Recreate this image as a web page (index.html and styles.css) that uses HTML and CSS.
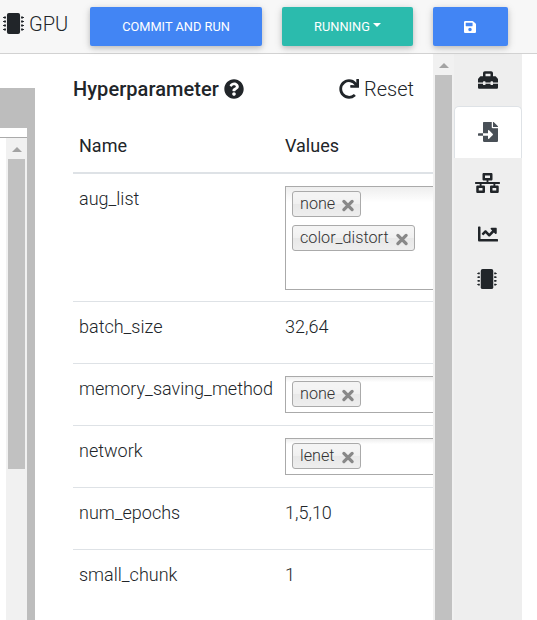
FILE: index.html
```
<!DOCTYPE html>
<html lang="en">
<head>
<meta charset="utf-8">
<title>Hyperparameter</title>
<link rel="stylesheet" href="styles.css">
</head>
<body>
<svg class="defs" aria-hidden="true">
  <symbol id="chip" viewBox="0 0 512 512">
    <rect x="96" width="320" height="512" rx="48"/>
    <path id="pins" d="M512 106v12a6 6 0 0 1-6 6h-18v6a6 6 0 0 1-6 6h-42V88h42a6 6 0 0 1 6 6v6h18a6 6 0 0 1 6 6zM0 106v12a6 6 0 0 0 6 6h18v6a6 6 0 0 0 6 6h42V88H30a6 6 0 0 0-6 6v6H6a6 6 0 0 0-6 6z"/>
    <use href="#pins" y="96"/><use href="#pins" y="192"/><use href="#pins" y="288"/>
  </symbol>
  <symbol id="cross" viewBox="0 0 12 12">
    <path d="M2.2 2.2l7.6 7.6M9.8 2.2L2.2 9.8" fill="none" stroke="#888" stroke-width="3" stroke-linecap="round"/>
  </symbol>
</svg>
<div class="app">
  <header class="toolbar">
    <div class="gpu"><svg class="icon"><use href="#chip"/></svg><span>GPU</span></div>
    <button class="btn commit">COMMIT AND RUN</button>
    <button class="btn running">RUNNING<span class="caret"></span></button>
    <button class="btn save" aria-label="Save"><svg viewBox="0 0 448 512"><path d="M433.941 129.941l-83.882-83.882A48 48 0 0 0 316.118 32H48C21.49 32 0 53.49 0 80v352c0 26.51 21.49 48 48 48h352c26.51 0 48-21.49 48-48V163.882a48 48 0 0 0-14.059-33.941zM224 416c-35.346 0-64-28.654-64-64 0-35.346 28.654-64 64-64s64 28.654 64 64c0 35.346-28.654 64-64 64zm96-304.52V212c0 6.627-5.373 12-12 12H76c-6.627 0-12-5.373-12-12V108c0-6.627 5.373-12 12-12h228.52c3.183 0 6.235 1.264 8.485 3.515l3.48 3.48A11.996 11.996 0 0 1 320 111.48z"/></svg></button>
  </header>
  <main class="workspace">
    <aside class="canvas">
      <div class="canvas-head"></div>
      <div class="canvas-body">
        <div class="scrollbar"><i class="arrow"></i><i class="thumb"></i></div>
      </div>
    </aside>
    <section class="panel">
      <div class="panel-head">
        <h1>Hyperparameter</h1>
        <svg class="icon help" viewBox="0 0 512 512"><path d="M504 256c0 136.997-111.043 248-248 248S8 392.997 8 256C8 119.083 119.043 8 256 8s248 111.083 248 248zM262.655 90c-54.497 0-89.255 22.957-116.549 63.758-3.536 5.286-2.353 12.415 2.715 16.258l34.699 26.31c5.205 3.947 12.621 3.008 16.665-2.122 17.864-22.658 30.113-35.797 57.303-35.797 20.429 0 45.698 13.148 45.698 32.958 0 14.976-12.363 22.667-32.534 33.976C247.128 238.528 216 254.941 216 296v4c0 6.627 5.373 12 12 12h56c6.627 0 12-5.373 12-12v-1.333c0-28.462 83.186-29.647 83.186-106.667 0-58.002-60.165-102-116.531-102zM256 338c-25.365 0-46 20.635-46 46 0 25.364 20.635 46 46 46s46-20.636 46-46c0-25.365-20.635-46-46-46z"/></svg>
        <div class="reset"><svg class="icon" viewBox="0 0 512 512"><path d="M500.33 0h-47.41a12 12 0 0 0-12 12.57l4 82.76A247.42 247.42 0 0 0 256 8C119.34 8 7.9 119.53 8 256.19 8.1 393.07 119.1 504 256 504a247.1 247.1 0 0 0 166.18-63.91 12 12 0 0 0 .48-17.43l-34-34a12 12 0 0 0-16.38-.55A176 176 0 1 1 402.1 157.8l-101.53-4.87a12 12 0 0 0-12.57 12v47.41a12 12 0 0 0 12 12h200.33a12 12 0 0 0 12-12V12a12 12 0 0 0-12-12z"/></svg><span>Reset</span></div>
      </div>
      <div class="table">
        <div class="row head"><div>Name</div><div>Values</div></div>
        <div class="row first"><div>aug_list</div><div class="select tall"><span class="tag">none<svg><use href="#cross"/></svg></span><span class="tag">color_distort<svg><use href="#cross"/></svg></span></div></div>
        <div class="row"><div>batch_size</div><div>32,64</div></div>
        <div class="row"><div>memory_saving_method</div><div class="select"><span class="tag">none<svg><use href="#cross"/></svg></span></div></div>
        <div class="row"><div>network</div><div class="select"><span class="tag">lenet<svg><use href="#cross"/></svg></span></div></div>
        <div class="row"><div>num_epochs</div><div>1,5,10</div></div>
        <div class="row"><div>small_chunk</div><div>1</div></div>
      </div>
    </section>
    <div class="scrollbar main-scroll"><i class="arrow"></i><i class="thumb"></i></div>
    <nav class="tabs">
      <div class="tab"><svg class="icon" viewBox="0 0 512 512"><path d="M502.63 214.63l-45.25-45.25c-6-6-14.14-9.37-22.63-9.37H384V80c0-26.51-21.49-48-48-48H176c-26.51 0-48 21.49-48 48v80H77.25c-8.49 0-16.62 3.37-22.63 9.37L9.37 214.63c-6 6-9.37 14.14-9.37 22.63V320h128v-16c0-8.84 7.16-16 16-16h32c8.84 0 16 7.16 16 16v16h128v-16c0-8.84 7.16-16 16-16h32c8.84 0 16 7.16 16 16v16h128v-82.75c0-8.48-3.37-16.62-9.37-22.62zM320 160H192V96h128v64zm64 208c0 8.84-7.16 16-16 16h-32c-8.84 0-16-7.16-16-16v-16H192v16c0 8.84-7.16 16-16 16h-32c-8.84 0-16-7.16-16-16v-16H0v96c0 17.67 14.33 32 32 32h448c17.67 0 32-14.33 32-32v-96H384v16z"/></svg></div>
      <div class="tab active"><svg class="icon" viewBox="0 0 512 512"><path d="M16 288c-8.8 0-16 7.2-16 16v32c0 8.8 7.2 16 16 16h112v-64zm489-183L407.1 7c-4.5-4.5-10.6-7-17-7H384v128h128v-6.1c0-6.3-2.5-12.4-7-16.9zm-153 31V0H152c-13.3 0-24 10.7-24 24v264h128v-65.2c0-14.3 17.3-21.4 27.4-11.3L379 308c6.6 6.7 6.6 17.4 0 24l-95.7 96.4c-10.1 10.1-27.4 3-27.4-11.3V352H128v136c0 13.3 10.7 24 24 24h336c13.3 0 24-10.7 24-24V160H376c-13.2 0-24-10.8-24-24z"/></svg></div>
      <div class="tab"><svg class="icon wide" viewBox="0 0 640 512"><path d="M640 264v-16c0-8.84-7.16-16-16-16H344v-40h72c17.67 0 32-14.33 32-32V32c0-17.67-14.33-32-32-32H224c-17.67 0-32 14.33-32 32v128c0 17.67 14.33 32 32 32h72v40H16c-8.84 0-16 7.16-16 16v16c0 8.84 7.16 16 16 16h104v40H64c-17.67 0-32 14.33-32 32v128c0 17.67 14.33 32 32 32h160c17.67 0 32-14.33 32-32V352c0-17.67-14.33-32-32-32h-56v-40h304v40h-56c-17.67 0-32 14.33-32 32v128c0 17.67 14.33 32 32 32h160c17.67 0 32-14.33 32-32V352c0-17.67-14.33-32-32-32h-56v-40h104c8.84 0 16-7.16 16-16zM256 128V64h128v64H256zm-64 320H96v-64h96v64zm352 0h-96v-64h96v64z"/></svg></div>
      <div class="tab"><svg class="icon" viewBox="0 0 512 512"><path d="M496 384H64V80c0-8.84-7.16-16-16-16H16C7.16 64 0 71.16 0 80v336c0 17.67 14.33 32 32 32h464c8.84 0 16-7.16 16-16v-32c0-8.84-7.16-16-16-16zM464 96H345.94c-21.38 0-32.09 25.85-16.97 40.97l32.4 32.4L288 242.75l-73.37-73.37c-12.5-12.5-32.76-12.5-45.25 0l-68.69 68.69c-6.25 6.25-6.25 16.38 0 22.63l22.62 22.62c6.25 6.25 16.38 6.25 22.63 0L192 237.25l73.37 73.37c12.5 12.5 32.76 12.5 45.25 0l96-96 32.4 32.4c15.12 15.12 40.97 4.41 40.97-16.97V112c.01-8.84-7.15-16-15.99-16z"/></svg></div>
      <div class="tab last"><svg class="icon"><use href="#chip"/></svg></div>
    </nav>
  </main>
</div>
</body>
</html>
```
FILE: styles.css
```
* { box-sizing: border-box; }
body {
  margin: 0;
  font: 400 18px/27px Roboto, sans-serif;
  color: #212529;
  background: #fff;
  overflow: hidden;
}
.defs { position: absolute; width: 0; height: 0; }
.app { display: flex; flex-direction: column; width: 537px; height: 620px; }

.icon { display: block; width: 20px; height: 20px; fill: currentColor; flex: none; }
.icon.wide { width: 25px; }

.toolbar {
  display: flex;
  align-items: flex-start;
  flex: none;
  height: 54px;
  padding: 7px 0 0 3px;
  background: #f7f7f7;
  border-bottom: 1px solid #d2d2d2;
}
.gpu { display: flex; gap: 5px; width: 87px; padding-top: 6px; font-size: 20px; line-height: 22px; font-weight: 300; }
.gpu .icon { width: 21px; height: 21px; }
.btn {
  position: relative;
  display: flex;
  align-items: center;
  justify-content: center;
  height: 39px;
  margin-right: 20px;
  padding: 0;
  border: 0;
  border-radius: 2px;
  color: #fff;
  background: #4285f4;
  font: 400 12.8px/20px Roboto, sans-serif;
  box-shadow: 0 2px 5px rgba(0, 0, 0, .16), 0 2px 10px rgba(0, 0, 0, .12);
}
.commit { width: 172px; }
.running { width: 131px; background: #2bbbad; }
.save { width: 75px; }
.save svg { width: 12px; height: 14px; margin-right: 1px; fill: #fff; }
.caret { margin: -4px 0 0 3px; border: 4px solid transparent; border-top-color: #fff; border-bottom: 0; }

.workspace { display: flex; flex: 1; min-height: 0; }
.canvas { display: flex; flex-direction: column; width: 35px; margin-top: 34px; padding: 40px 8px 0 0; background: #bdbdbd; }
.canvas-head { height: 10px; background: #fff; border-bottom: 1px solid #aaa; }
.canvas-body { display: flex; justify-content: flex-end; flex: 1; background: #fff; }

.scrollbar { display: flex; flex-direction: column; align-items: center; width: 21px; background: #f1f1f1; }
.arrow { margin: 9px 0 7px; border: 5px solid transparent; border-top: 0; border-bottom-color: #a3a3a3; }
.thumb { width: 17px; height: 310px; background: #c1c1c1; }
.main-scroll { flex: none; }
.main-scroll .thumb { flex: 1; }

.panel { width: 398px; padding-left: 38px; overflow: hidden; }
.panel-head { display: flex; align-items: center; height: 70px; font-size: 20px; }
.panel-head h1 { margin: 0; font-size: 20px; font-weight: 500; letter-spacing: .06px; }
.help { margin-left: 5px; }
.reset { display: flex; align-items: center; gap: 5px; margin-left: 95px; font-weight: 300; }

.table { width: 420px; font-weight: 300; }
.row {
  display: grid;
  grid-template-columns: 200px 240px;
  column-gap: 6px;
  height: 62px;
  padding: 11px 6px 0;
  border-top: 1px solid #dee2e6;
}
.row.head { height: 48px; padding-top: 8px; border: 0; font-weight: 400; }
.row.first { height: 129px; border-top-width: 2px; }
.select {
  display: flex;
  flex-direction: column;
  align-items: flex-start;
  gap: 8px;
  height: 37px;
  margin-top: 1px;
  padding: 4px 6px;
  border: 1px solid #aaa;
  background: linear-gradient(#eee, #fff 15%);
}
.select.tall { height: 104px; }
.tag {
  display: flex;
  align-items: center;
  gap: 6px;
  height: 26px;
  padding: 0 5px 0 7px;
  border: 1px solid #aaa;
  border-radius: 3px;
  font-size: 16.2px;
  line-height: 24px;
  color: #333;
  background: linear-gradient(#f4f4f4 20%, #f0f0f0 50%, #e8e8e8 52%, #eee);
}
.tag svg { width: 14px; height: 13px; margin-top: 2px; }

.tabs { display: flex; flex-direction: column; align-items: flex-start; width: 68px; background: #eee; }
.tab { display: flex; align-items: center; justify-content: center; width: 68px; height: 51px; padding: 0 1px 2px 0; flex: none; }
.tab:first-child { height: 52px; padding-bottom: 0; }
.tab.active { height: 52px; color: #495057; background: #fff; border: 1px solid #dee2e6; border-bottom: 0; border-radius: 5px 5px 0 0; }
.tab.last { height: 40px; padding-right: 3px; }
```
